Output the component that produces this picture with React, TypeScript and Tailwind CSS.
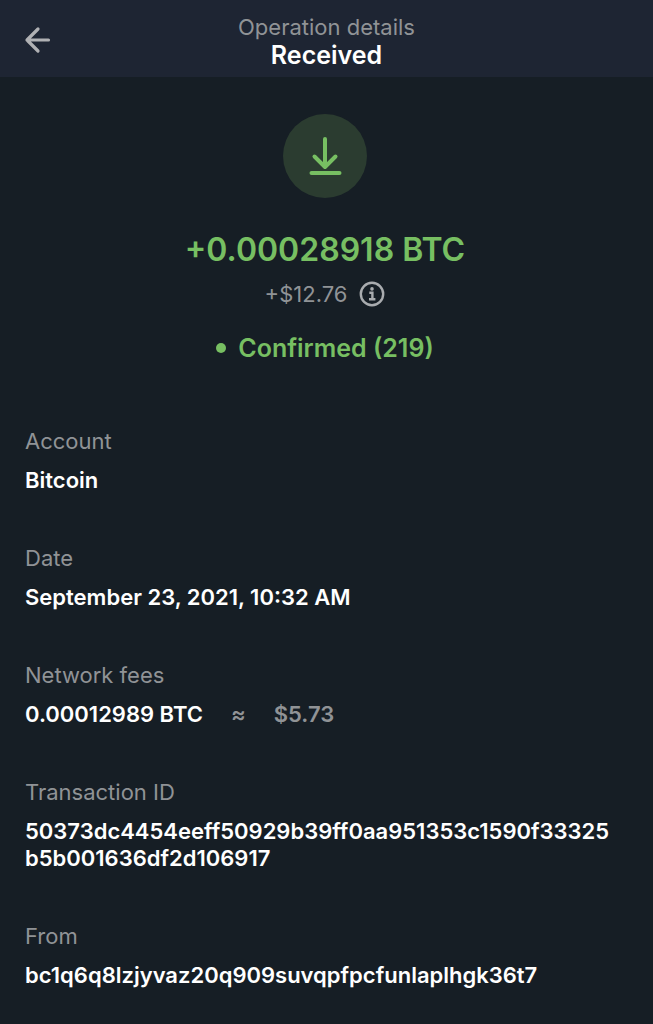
import type { ReactNode } from "react";

interface DetailRowProps {
  label: string;
  children: ReactNode;
}

function DetailRow({ label, children }: DetailRowProps) {
  return (
    <div>
      <dt className="text-[22px] leading-7 text-[#909396]">{label}</dt>
      <dd className="mt-3 text-[22px] leading-[27px] font-semibold break-all text-white">
        {children}
      </dd>
    </div>
  );
}

export default function App() {
  return (
    <div className="min-h-screen w-full bg-[#161e25] font-['Inter',sans-serif]">
      <header className="relative bg-[#1e2533] pt-[13px] pb-2 text-center">
        <button
          type="button"
          aria-label="Back"
          className="absolute top-6 left-5 flex size-8 items-center justify-center text-[#b0b1b4]"
        >
          <svg
            viewBox="0 0 32 32"
            className="size-8"
            fill="none"
            stroke="currentColor"
            strokeWidth="3.2"
            strokeLinecap="round"
            strokeLinejoin="round"
          >
            <path d="M28.5 16H7M18 5L7 16l11 11" />
          </svg>
        </button>
        <p className="text-[22px] leading-7 text-[#909396]">Operation details</p>
        <h1 className="text-[25px] leading-7 font-semibold text-white">Received</h1>
      </header>

      <main className="pt-[37px] pr-7 pb-8 pl-[25px]">
        <section className="flex flex-col items-center">
          <div className="flex size-[84px] items-center justify-center rounded-full bg-[#2b3c30] text-[#77bf62]">
            <svg
              viewBox="0 0 40 40"
              className="size-10"
              fill="none"
              stroke="currentColor"
              strokeWidth="4"
              strokeLinecap="round"
              strokeLinejoin="round"
            >
              <path d="M20 3v27M9.500 20.500L20 31l10.500-10.500M6.500 37h28" />
            </svg>
          </div>
          <p className="mt-8 text-[32px] leading-10 font-semibold text-[#77bf62]">
            +0.00028918 BTC
          </p>
          <div className="mt-[10px] flex items-center gap-3 text-[22px] leading-7 text-[#909396]">
            <span>+$12.76</span>
            <button type="button" aria-label="Rate information" className="text-[#a9acaf]">
              <svg
                viewBox="0 0 26 26"
                className="size-[26px]"
                fill="none"
                stroke="currentColor"
                strokeWidth="2.4"
              >
                <circle cx="13" cy="13" r="11.2" />
                <path d="M10.300 11.800H13.400v6M10 18.200h6.400" />
                <circle cx="13" cy="7.900" r="1.800" fill="currentColor" stroke="none" />
              </svg>
            </button>
          </div>
          <p className="mt-6 flex items-center gap-3 text-[25px] leading-8 font-semibold text-[#77bf62]">
            <span className="size-[10px] rounded-full bg-current" />
            Confirmed (219)
          </p>
        </section>

        <dl className="mt-[63px] mr-1 flex flex-col gap-[50px]">
          <DetailRow label="Account">Bitcoin</DetailRow>
          <DetailRow label="Date">September 23, 2021, 10:32 AM</DetailRow>
          <DetailRow label="Network fees">
            <span className="flex items-center gap-7">
              0.00012989 BTC
              <span className="text-[#909396]">≈</span>
              <span className="text-[#909396]">$5.73</span>
            </span>
          </DetailRow>
          <DetailRow label="Transaction ID">
            50373dc4454eeff50929b39ff0aa951353c1590f33325b5b001636df2d106917
          </DetailRow>
          <DetailRow label="From">bc1q6q8lzjyvaz20q909suvqpfpcfunlaplhgk36t7</DetailRow>
        </dl>
      </main>
    </div>
  );
}
